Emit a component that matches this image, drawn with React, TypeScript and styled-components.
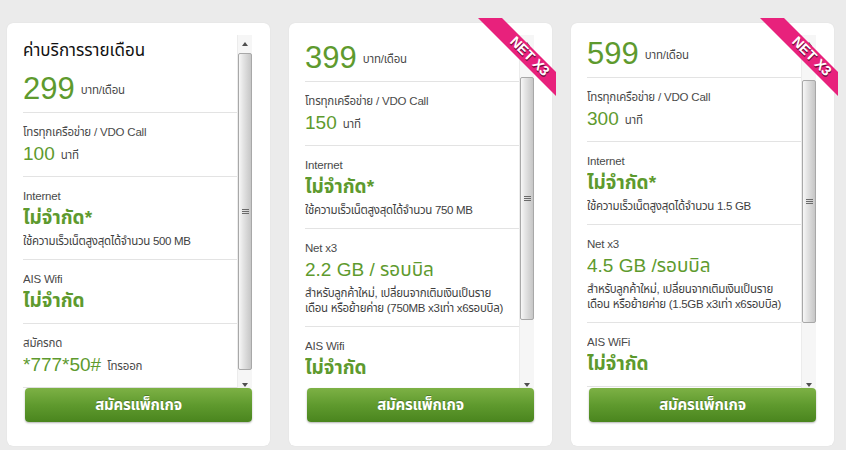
import styled, { createGlobalStyle } from "styled-components";

const GlobalStyles = createGlobalStyle`
  *{
    margin: 0;
    padding: 0;
    box-sizing: border-box;
  }
  body{
    background: #ebebeb;
    font-family: "Liberation Sans", "Noto Sans", "Noto Sans Thai", "DejaVu Sans", sans-serif;
  }
`;

type Section = {
  label: string;
  value: string;
  strong?: boolean;
  unit?: string;
  notes?: string[];
};

type Plan = {
  heading?: string;
  price: string;
  offset: number;
  thumbTop: number;
  thumbHeight: number;
  ribbon?: boolean;
  sections: Section[];
};

const plans: Plan[] = [
  {
    heading: "ค่าบริการรายเดือน",
    price: "299",
    offset: 0,
    thumbTop: 1,
    thumbHeight: 317,
    sections: [
      { label: "โทรทุกเครือข่าย / VDO Call", value: "100", unit: "นาที" },
      {
        label: "Internet",
        value: "ไม่จำกัด*",
        strong: true,
        notes: ["ใช้ความเร็วเน็ตสูงสุดได้จำนวน 500 MB"],
      },
      { label: "AIS Wifi", value: "ไม่จำกัด", strong: true },
      { label: "สมัครกด", value: "*777*50#", unit: "โทรออก" },
    ],
  },
  {
    price: "399",
    offset: 2,
    thumbTop: 25,
    thumbHeight: 243,
    ribbon: true,
    sections: [
      { label: "โทรทุกเครือข่าย / VDO Call", value: "150", unit: "นาที" },
      {
        label: "Internet",
        value: "ไม่จำกัด*",
        strong: true,
        notes: ["ใช้ความเร็วเน็ตสูงสุดได้จำนวน 750 MB"],
      },
      {
        label: "Net x3",
        value: "2.2 GB / รอบบิล",
        notes: [
          "สำหรับลูกค้าใหม่, เปลี่ยนจากเติมเงินเป็นราย",
          "เดือน หรือย้ายค่าย (750MB x3เท่า x6รอบบิล)",
        ],
      },
      { label: "AIS Wifi", value: "ไม่จำกัด", strong: true },
    ],
  },
  {
    price: "599",
    offset: 6,
    thumbTop: 28,
    thumbHeight: 243,
    ribbon: true,
    sections: [
      { label: "โทรทุกเครือข่าย / VDO Call", value: "300", unit: "นาที" },
      {
        label: "Internet",
        value: "ไม่จำกัด*",
        strong: true,
        notes: ["ใช้ความเร็วเน็ตสูงสุดได้จำนวน 1.5 GB"],
      },
      {
        label: "Net x3",
        value: "4.5 GB /รอบบิล",
        notes: [
          "สำหรับลูกค้าใหม่, เปลี่ยนจากเติมเงินเป็นราย",
          "เดือน หรือย้ายค่าย (1.5GB x3เท่า x6รอบบิล)",
        ],
      },
      { label: "AIS WiFi", value: "ไม่จำกัด", strong: true },
    ],
  },
];

function Ribbon() {
  return (
    <RibbonSvg width="78" height="80" viewBox="0 0 78 80">
      <polygon points="0,0 24,0 78,54 78,78" fill="#e8217c" />
      <g transform="translate(52 38) rotate(45)">
        <text
          x="1"
          y="6"
          textAnchor="middle"
          fontSize="14"
          fontWeight="700"
          fill="#6e0d38"
          fontFamily="Liberation Sans, sans-serif"
        >
          NET X3
        </text>
        <text
          x="0"
          y="5"
          textAnchor="middle"
          fontSize="14"
          fontWeight="700"
          fill="#ffffff"
          fontFamily="Liberation Sans, sans-serif"
        >
          NET X3
        </text>
      </g>
    </RibbonSvg>
  );
}

function PlanCard({ plan }: { plan: Plan }) {
  return (
    <Card>
      {plan.ribbon && <Ribbon />}
      <Body>
        <Viewport>
          <Content style={{ marginTop: -plan.offset }}>
            {plan.heading && <Heading>{plan.heading}</Heading>}
            <PriceRow>
              <Price>{plan.price}</Price>
              <Unit>บาท/เดือน</Unit>
            </PriceRow>
            {plan.sections.map((s) => (
              <Item key={s.label}>
                <Label>{s.label}</Label>
                <ValueRow>
                  <Value $strong={!!s.strong}>{s.value}</Value>
                  {s.unit && <Unit>{s.unit}</Unit>}
                </ValueRow>
                {s.notes && (
                  <Notes>
                    {s.notes.map((n) => (
                      <Note key={n}>{n}</Note>
                    ))}
                  </Notes>
                )}
              </Item>
            ))}
          </Content>
        </Viewport>
        <Scrollbar>
          <ArrowButton $down={false}>
            <Arrow $down={false} />
          </ArrowButton>
          <Track>
            <Thumb
              style={{ marginTop: plan.thumbTop, height: plan.thumbHeight }}
            >
              <Grip />
            </Thumb>
          </Track>
          <ArrowButton $down>
            <Arrow $down />
          </ArrowButton>
        </Scrollbar>
      </Body>
      <Button>สมัครแพ็กเกจ</Button>
    </Card>
  );
}

function App() {
  return (
    <Page>
      <GlobalStyles />
      {plans.map((p) => (
        <PlanCard key={p.price} plan={p} />
      ))}
    </Page>
  );
}

export default App;

const Page = styled.div`
  width: 846px;
  height: 450px;
  display: flex;
  gap: 19px;
  padding: 23px 12px 4px 7px;
  background: #ebebeb;
`;

const Card = styled.div`
  position: relative;
  width: 263px;
  height: 423px;
  background: #ffffff;
  border-radius: 6px;
  box-shadow: 0 0 1px rgba(0, 0, 0, 0.12);
  padding: 12px 18px 24px 16px;
  display: flex;
  flex-direction: column;
`;

const RibbonSvg = styled.svg`
  position: absolute;
  top: -5px;
  right: -4px;
`;

const Body = styled.div`
  flex: 1;
  min-height: 0;
  display: flex;
`;

const Viewport = styled.div`
  flex: 1;
  overflow: hidden;
`;

const Content = styled.div`
  display: flex;
  flex-direction: column;
`;

const Heading = styled.h2`
  margin-top: 3px;
  font-size: 17px;
  line-height: 26px;
  font-weight: 400;
  color: #111111;
`;

const PriceRow = styled.div`
  display: flex;
  align-items: center;
  gap: 6px;
  height: 49px;
  padding: 6px 0 4px;
  border-bottom: 1px solid #e3e3e3;
`;

const Price = styled.span`
  font-size: 31px;
  line-height: 38px;
  color: #5e9a2e;
`;

const Unit = styled.span`
  font-size: 11.5px;
  letter-spacing: -0.2px;
  color: #4a4a4a;
  padding-top: 2px;
`;

const Item = styled.div`
  padding: 10px 0 9px;
  border-bottom: 1px solid #e3e3e3;
`;

const Label = styled.div`
  font-size: 11.5px;
  letter-spacing: -0.2px;
  line-height: 18px;
  color: #4a4a4a;
`;

const ValueRow = styled.div`
  display: flex;
  align-items: center;
  gap: 6px;
  height: 26px;
`;

const Value = styled.span<{ $strong: boolean }>`
  font-size: 19px;
  line-height: 26px;
  font-weight: ${(p) => (p.$strong ? 700 : 400)};
  color: #5e9a2e;
`;

const Notes = styled.div`
  margin-top: 3px;
  padding-bottom: 1px;
`;

const Note = styled.div`
  font-size: 11.5px;
  letter-spacing: -0.3px;
  line-height: 15px;
  color: #3f3f3f;
  white-space: nowrap;
`;

const Scrollbar = styled.div`
  width: 15px;
  display: flex;
  flex-direction: column;
  background: #f6f6f6;
  border-left: 1px solid #ececec;
`;

const ArrowButton = styled.div<{ $down: boolean }>`
  height: 17px;
  display: flex;
  justify-content: center;
  align-items: ${(p) => (p.$down ? "flex-end" : "center")};
  padding-bottom: ${(p) => (p.$down ? "1px" : "0")};
`;

const Arrow = styled.div<{ $down: boolean }>`
  width: 0;
  height: 0;
  border-left: 3.5px solid transparent;
  border-right: 3.5px solid transparent;
  ${(p) =>
    p.$down
      ? "border-top: 4px solid #505050;"
      : "border-bottom: 4px solid #505050;"}
`;

const Track = styled.div`
  flex: 1;
  display: flex;
  flex-direction: column;
`;

const Thumb = styled.div`
  width: 14px;
  border: 1px solid #a8a8a8;
  border-radius: 2px;
  background: linear-gradient(to right, #f7f7f7 0%, #e4e4e4 35%, #c6c6c6 100%);
  display: flex;
  align-items: center;
  justify-content: center;
`;

const Grip = styled.div`
  width: 7px;
  height: 5px;
  background: repeating-linear-gradient(
    to bottom,
    #6a6a6a 0,
    #6a6a6a 1px,
    transparent 1px,
    transparent 2px
  );
`;

const Button = styled.button`
  height: 34px;
  margin-left: 2px;
  border: none;
  border-radius: 4px;
  background: linear-gradient(to bottom, #7db145 0%, #5f9a2e 50%, #4a851e 100%);
  box-shadow: 0 1px 2px rgba(0, 0, 0, 0.3);
  color: #ffffff;
  font-family: inherit;
  font-size: 15px;
  letter-spacing: -0.2px;
  font-weight: 700;
  text-shadow: 0 -1px 0 rgba(0, 0, 0, 0.25);
  cursor: pointer;
`;
